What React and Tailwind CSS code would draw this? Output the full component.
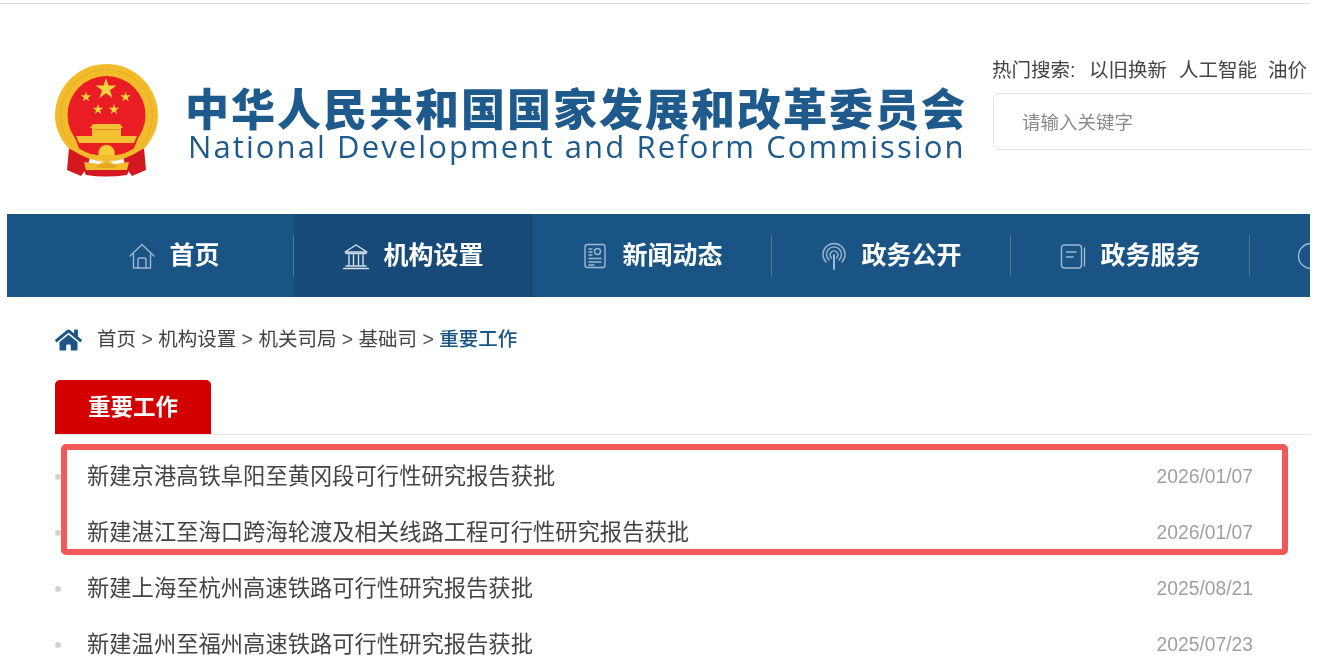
import React from "react";
import { FaHome } from "react-icons/fa";

const navItems = [
  { name: "首页", icon: "home" },
  { name: "机构设置", icon: "bank", active: true },
  { name: "新闻动态", icon: "news" },
  { name: "政务公开", icon: "signal" },
  { name: "政务服务", icon: "book" },
];

const articles = [
  { title: "新建京港高铁阜阳至黄冈段可行性研究报告获批", date: "2026/01/07" },
  { title: "新建湛江至海口跨海轮渡及相关线路工程可行性研究报告获批", date: "2026/01/07" },
  { title: "新建上海至杭州高速铁路可行性研究报告获批", date: "2025/08/21" },
  { title: "新建温州至福州高速铁路可行性研究报告获批", date: "2025/07/23" },
];

const starPoints = (cx, cy, r) => {
  const pts = [];
  for (let i = 0; i < 10; i++) {
    const rad = i % 2 === 0 ? r : r * 0.38;
    const a = -Math.PI / 2 + (i * Math.PI) / 5;
    pts.push(`${(cx + rad * Math.cos(a)).toFixed(2)},${(cy + rad * Math.sin(a)).toFixed(2)}`);
  }
  return pts.join(" ");
};

const Emblem = () => (
  <svg width="103" height="113" viewBox="0 0 103 113" className="shrink-0">
    {/* drapes */}
    <path d="M14 84 L12 106 L26 112 L32 104 L36 90 Z" fill="#d3191f" />
    <path d="M89 84 L91 106 L77 112 L71 104 L67 90 Z" fill="#d3191f" />
    <path d="M28 104 L75 104 L72 111 Q51 114 31 111 Z" fill="#d3191f" />
    {/* wreath ring */}
    <path d="M51.5 0 C80 0 103 23 103 51.5 C103 64 98 74 90 84 L78 90 L25 90 L13 84 C5 74 0 64 0 51.5 C0 23 23 0 51.5 0 Z" fill="#f1bb2c" />
    <circle cx="51.5" cy="51.5" r="46" fill="none" stroke="#e3a81e" strokeWidth="0.8" />
    <circle cx="51.5" cy="51" r="39" fill="#ea1c24" />
    <path d="M20 74 L83 74 L76 92 L27 92 Z" fill="#ea1c24" />
    {/* stars */}
    <polygon points={starPoints(51, 25, 11)} fill="#f7d23e" />
    <polygon points={starPoints(31, 33, 5.5)} fill="#f7d23e" />
    <polygon points={starPoints(70.5, 33, 5.5)} fill="#f7d23e" />
    <polygon points={starPoints(43, 45.5, 5.5)} fill="#f7d23e" />
    <polygon points={starPoints(59, 45.5, 5.5)} fill="#f7d23e" />
    {/* gate */}
    <path d="M38 60 L65 60 L68 64 L66 64 L66 72 L37 72 L37 64 L35 64 Z" fill="#f4c132" />
    <path d="M21 72 L82 72 L79 79 L24 79 Z" fill="#f4c132" />
    <rect x="39" y="65" width="25" height="1" fill="#d98f1a" />
    {/* lower ribbon and gear */}
    <circle cx="51.5" cy="89" r="8" fill="#f6cb3a" stroke="#dd9f1c" strokeWidth="1" strokeDasharray="2 1.4" />
    <path d="M18 80 Q32 91 42 91 L61 91 Q71 91 85 80 L88 84 Q72 97 51.5 97 Q31 97 15 84 Z" fill="#f1bb2c" />
    <path d="M29 98 L44 100 L51.5 96 L59 100 L74 98 L72 106 L31 106 Z" fill="#f1bb2c" />
    <path d="M40 102 Q51 97 63 102 L59 104 L44 104 Z" fill="#e3a81e" />
  </svg>
);

const NavIcon = ({ type }) => {
  const common = {
    fill: "none",
    stroke: "#9db8d0",
    strokeWidth: 1.4,
    strokeLinecap: "round",
    strokeLinejoin: "round",
  };
  if (type === "home")
    return (
      <svg width="28" height="28" viewBox="0 0 28 28" {...common}>
        <path d="M2 14 L14 2.5 L26 14" />
        <path d="M5.5 12 V26 H22.5 V12" />
        <path d="M10 26 V18 Q10 16 12 16 H16 Q18 16 18 18 V26" />
      </svg>
    );
  if (type === "bank")
    return (
      <svg width="28" height="28" viewBox="0 0 28 28" {...common} stroke="#d5e0ea">
        <path d="M3 10 L14 3 L25 10 Z" />
        <path d="M4 11.5 H24" />
        <path d="M7 13 V23 M11.5 13 V23 M16.5 13 V23 M21 13 V23" />
        <path d="M4 24 H24 M1.5 26.5 H26.5" />
      </svg>
    );
  if (type === "news")
    return (
      <svg width="28" height="28" viewBox="0 0 28 28" {...common}>
        <rect x="4" y="2.5" width="20" height="23" rx="2.5" />
        <circle cx="16.5" cy="9.5" r="3" />
        <path d="M8 7 H11 M8 10 H11 M8 13 H11 M8 16.5 H20 M8 20 H20 M8 23 H13" />
      </svg>
    );
  if (type === "signal")
    return (
      <svg width="28" height="28" viewBox="0 0 28 28" {...common}>
        <path d="M6 20 A11 11 0 1 1 22 20" />
        <path d="M9 18 A7.5 7.5 0 1 1 19 18" />
        <path d="M11.5 16 A4 4 0 1 1 16.5 16" />
        <path d="M14 13 V27" strokeWidth="2" />
      </svg>
    );
  if (type === "book")
    return (
      <svg width="28" height="28" viewBox="0 0 28 28" {...common}>
        <rect x="2.5" y="3" width="20" height="23" rx="3" />
        <path d="M7.5 10 H17 M7.5 15 H14" />
        <path d="M25.5 6 V24" />
      </svg>
    );
  return (
    <svg width="28" height="28" viewBox="0 0 28 28" {...common}>
      <circle cx="14" cy="14" r="12.5" />
    </svg>
  );
};

const App = () => {
  return (
    <div className="relative w-[1318px] h-[667px] overflow-hidden bg-white text-[#444] blur-[0.6px] font-['Liberation_Sans','Noto_Sans_CJK_SC',sans-serif]">
      <div className="w-[1310px] h-full overflow-hidden">
        <div className="h-[3px]"></div>
        <div className="h-px bg-[#dcdcdc]"></div>

        {/* header */}
        <div className="h-[210px] flex justify-between">
          <div className="flex pl-[55px] pt-[60px]">
            <Emblem />
            <div className="ml-[27px] pt-[27px]">
              <div className="h-[40px] text-[44px] leading-[40px] font-black tracking-[2px] text-[#1f5a8c] whitespace-nowrap">
                中华人民共和国国家发展和改革委员会
              </div>
              <div className="pl-[3px] text-[31px] leading-[30px] tracking-[2.1px] text-[#1f5a8c] whitespace-nowrap font-['Open_Sans',sans-serif]">
                National Development and Reform Commission
              </div>
            </div>
          </div>
          <div className="w-[318px] shrink-0 pt-[54px]">
            <div className="flex text-[19.5px] leading-[24px] whitespace-nowrap">
              <span className="w-[97px]">热门搜索:</span>
              <span className="mr-[12px]">以旧换新</span>
              <span className="mr-[11px]">人工智能</span>
              <span>油价</span>
            </div>
            <div className="mt-[11px] ml-px h-[57px] w-[330px] flex items-center pl-[28px] pt-[3px] border border-[#e3e3e3] rounded-[6px] text-[18.5px] text-[#8a8a8a]">
              请输入关键字
            </div>
          </div>
        </div>

        {/* nav */}
        <div className="ml-[7px] h-[83px] flex items-stretch pl-[48px] bg-[#1a5484] whitespace-nowrap">
          {navItems.map((item) => (
            <React.Fragment key={item.name}>
              <div
                className={`shrink-0 flex items-center justify-center gap-[13px] text-[25px] font-bold text-white ${
                  item.active ? "w-[239px] pr-[1px] bg-[#174a78]" : "w-[238px]"
                }`}
              >
                <NavIcon type={item.icon} />
                <span>{item.name}</span>
              </div>
              {!item.active && <div className="w-px h-[41px] self-center shrink-0 bg-[#4a7ba3]"></div>}
            </React.Fragment>
          ))}
          <div className="flex-1 flex items-center pl-[47px]">
            <NavIcon type="circle" />
          </div>
        </div>

        {/* breadcrumb */}
        <div className="h-[83px] pl-[55px] pt-[2px] flex items-center text-[19.5px] whitespace-nowrap">
          <FaHome className="w-[27px] h-[24px] text-[#1a5586] mr-[15px]" />
          <span>首页</span>
          <span className="mx-[5.4px] text-[#555]">&gt;</span>
          <span>机构设置</span>
          <span className="mx-[5.4px] text-[#555]">&gt;</span>
          <span>机关司局</span>
          <span className="mx-[5.4px] text-[#555]">&gt;</span>
          <span>基础司</span>
          <span className="mx-[5.4px] text-[#555]">&gt;</span>
          <span className="font-medium text-[#1a5586]">重要工作</span>
        </div>

        {/* tab */}
        <div className="ml-[55px] border-b border-[#e4e4e4] h-[55px]">
          <div className="w-[156px] h-[54px] pl-[33px] pt-[2px] flex items-center rounded-t-[5px] bg-[#d40000] text-[22.5px] font-bold text-white">
            重要工作
          </div>
        </div>

        {/* list */}
        <div className="pt-[14px] pl-[55px] pr-[57px]">
          {articles.map((row) => (
            <div key={row.title} className="h-14 flex items-center">
              <span className="w-[6px] h-[6px] rounded-full bg-[#d2d2d2] shrink-0"></span>
              <span className="ml-[26px] flex-1 text-[22.3px] text-[#444] whitespace-nowrap">{row.title}</span>
              <span className="pt-[1px] text-[19.3px] text-[#a0a0a0]">{row.date}</span>
            </div>
          ))}
        </div>
      </div>

      {/* annotation box drawn over the screenshot */}
      <div className="absolute left-[61px] top-[444px] w-[1227px] h-[111px] border-[6px] border-[#f25858] rounded-[5px]"></div>
    </div>
  );
};

export default App;
